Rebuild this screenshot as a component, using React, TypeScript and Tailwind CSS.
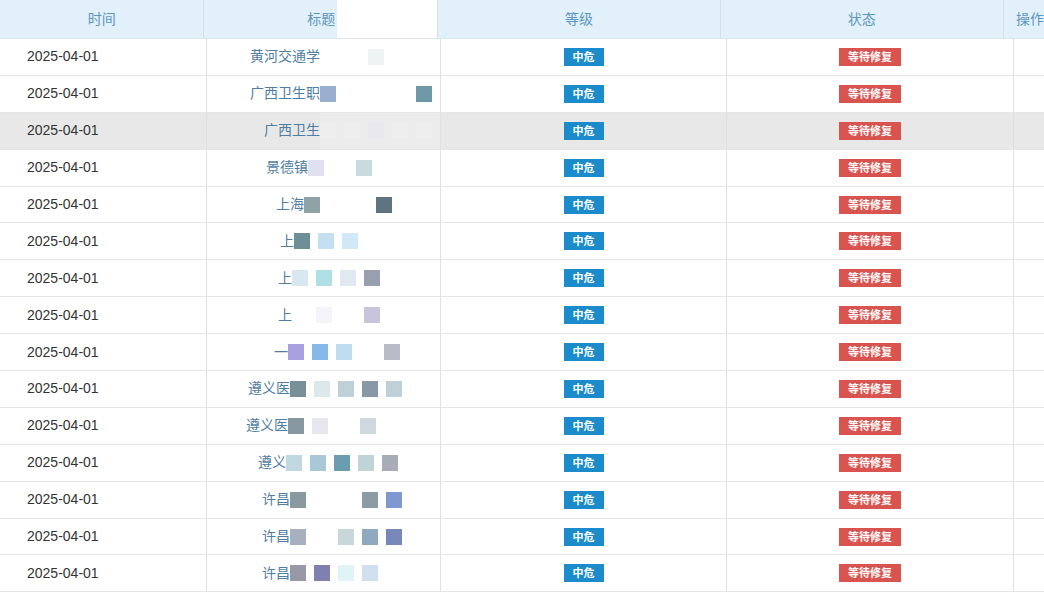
import React from "react";

const titles = ["黄河交通学", "广西卫生职", "广西卫生", "景德镇", "上海", "上", "上", "上", "一", "遵义医", "遵义医", "遵义", "许昌", "许昌", "许昌"];
const ends = [338, 322, 322, 308, 304, 294, 292, 292, 288, 290, 288, 286, 290, 290, 290];
const mosaics: string[][] = [
  ["#fff", "#fff", "#eef3f3", "#fff", "#fff"],
  ["#9aaed0", "#fff", "#fff", "#fff", "#6f98a6"],
  ["#eee", "#eee", "#e8e8ee", "#eee", "#eee"],
  ["#dfe0f0", "#fff", "#c8dce0", "#fff", "#fff"],
  ["#8fa2a6", "#fff", "#fff", "#5e7580", "#fff"],
  ["#6f8f98", "#c4dff0", "#d0e8f8", "#fff", "#fff"],
  ["#d8e8f0", "#b0e0e6", "#e0e8f0", "#98a0b0", "#fff"],
  ["#fff", "#f4f4fa", "#fff", "#c8c4dc", "#fff"],
  ["#a8a0e0", "#88b8e8", "#c0dcf0", "#fff", "#b8bcc8"],
  ["#7a9098", "#dce8ec", "#c0d0d8", "#8898a8", "#c0d0d8"],
  ["#8898a0", "#e4e8ec", "#fff", "#d0d8e0", "#fff"],
  ["#c0d8e0", "#a8c8d8", "#6c9cb0", "#c0d4d8", "#a8acb8"],
  ["#8a98a0", "#fff", "#fff", "#8c9ca4", "#8098d0"],
  ["#a8b0c0", "#fff", "#c8d8d8", "#90a8c0", "#7888b8"],
  ["#9898a8", "#8080b0", "#e0f4f8", "#d0e0f0", "#fff"],
];

export default function App() {
  return (
    <div className="w-[1044px] h-[592px] overflow-hidden bg-white text-[14px]" style={{ fontFamily: '"Liberation Sans", "Noto Sans CJK SC", sans-serif' }}>
      <div className="flex h-[39px] bg-[#e2f0fa] text-[#5b97bd] text-[14px] border-b border-[#d8e6f0]">
        <div className="w-[207px] flex items-center justify-center border-r border-[#d4e2ec]">时间</div>
        <div className="w-[234px] flex items-center border-r border-[#d4e2ec]">
          <div className="w-[133px] text-right pr-[2px] whitespace-nowrap">标题</div>
          <div className="w-[100px] h-full bg-white"></div>
        </div>
        <div className="w-[286px] flex items-center justify-center border-r border-[#d4e2ec]">等级</div>
        <div className="w-[287px] flex items-center justify-center border-r border-[#d4e2ec]">状态</div>
        <div className="flex-1 flex items-center pl-[12px] whitespace-nowrap">操作</div>
      </div>
      {titles.map((t, i) => (
        <div key={i} className={`flex h-[36.9px] border-b border-[#e6e6e6] ${i === 2 ? "bg-[#e8e8e8]" : ""}`}>
          <div className="w-[207px] flex items-center pl-[27px] text-[#333] border-r border-[#e0e0e0]">2025-04-01</div>
          <div className="w-[234px] flex items-center border-r border-[#e0e0e0]">
            <div className="text-right text-[#4f7ea3] whitespace-nowrap" style={{ width: ends[i] - 207 }}>{t}</div>
            <div className={`flex items-center h-full ${i === 2 ? "bg-[#ececec]" : "bg-white"}`}>
              {mosaics[i].map((c, j) => (
                <div key={j} className="w-[16px] h-[16px] mr-[8px]" style={{ backgroundColor: c }} />
              ))}
            </div>
          </div>
          <div className="w-[286px] flex items-center justify-center border-r border-[#e0e0e0]">
            <span className="bg-[#1b8bcb] text-white text-[11px] font-bold px-[9px] h-[18px] leading-[18px]">中危</span>
          </div>
          <div className="w-[287px] flex items-center justify-center border-r border-[#e0e0e0]">
            <span className="bg-[#d9534f] text-white text-[11px] font-bold px-[9px] h-[18px] leading-[18px]">等待修复</span>
          </div>
          <div className="flex-1"></div>
        </div>
      ))}
    </div>
  );
}
